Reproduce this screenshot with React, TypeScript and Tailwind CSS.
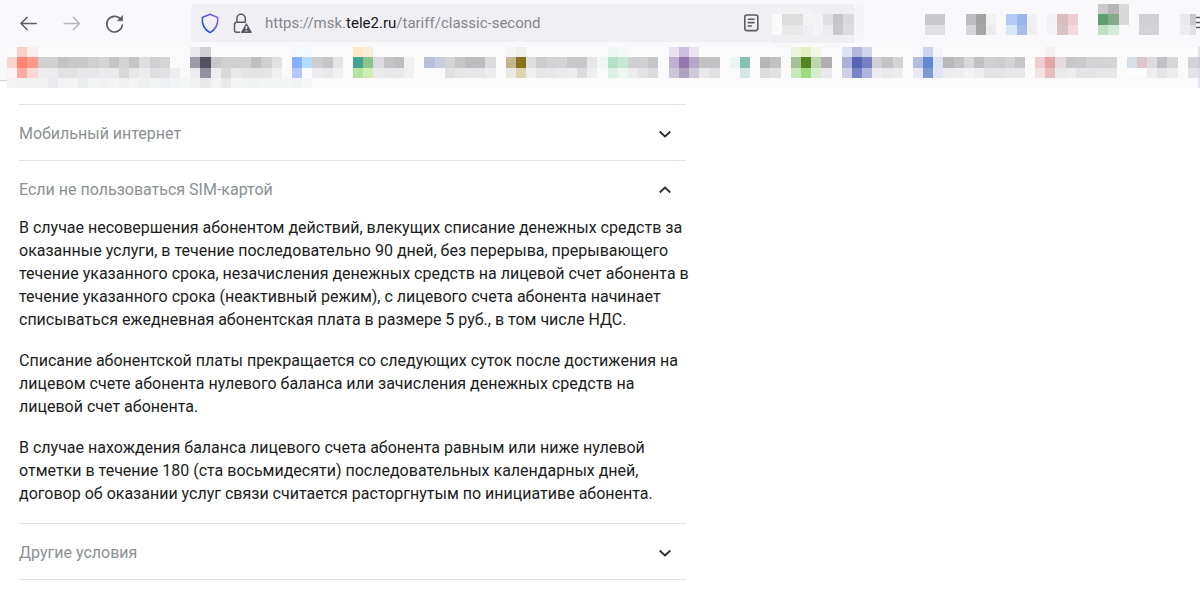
import React, { useState } from "react";

// [row, first column, colours of the following cells]
type Run = [number, number, string];

interface MosaicProps {
  runs: Run[];
  viewBox: string;
  className: string;
}

interface Section {
  id: string;
  title: string;
  paragraphs: string[][];
}

const toolbarRuns: Run[] = [
  [0, 0, "f1f1f4 f1f1f4 f1f1f4 f1f1f4 eeeef3 eeeef3 eeeef3 eeeef3 f6f6f8"],
  [1, 0, "fafafa dcdcdd dcdcdd f3f3f5 f3f3f5 e0e0e4 c6c6cb dad9de f5f5f7"],
  [2, 0, "fafafa e9e9ea e8e8ea eeeff2 f3f3f6 ebebef c8c8cd dddde1 f6f6f8"],
  [3, 0, "efeff2 efeff2 efeff2 efeff2 efeff2 efeff2 efeff2 efeff2 f7f7f9"],
  [1, 15, "cacace cacace"],
  [2, 15, "e0e0e3 e0e0e3"],
  [1, 19, "bdbdbf a2a2a2 f2f2f3"],
  [2, 19, "d5d5d7 a5a5a5 ebebec"],
  [1, 23, "b4ccf5 9ab6e8 f0f1f5"],
  [2, 23, "dae6fa a7bde8 efeff2"],
  [1, 27, "f2f2f5 d7bfc0 efcccf"],
  [2, 27, "f3f3f6 d5c3c5 f3dadc"],
  [0, 32, "cacacb b5b5b5 dadadb"],
  [1, 32, "5f9e74 85aa8a d9d9d9"],
  [2, 32, "bcdfc6 d2ead6"],
  [1, 36, "d0d0d4 cfcfd4"],
  [2, 36, "d4d4d8 d3d3d7"],
  [1, 40, "e9e9ec c9c9ce"],
  [2, 40, "eeeef0 e1e1e4"],
];

const bookmarkRuns: Run[] = [
  [0, 1, "fbd0c9 faeeee"],
  [1, 0, "fad5d0 fc8770 fb9a8a d0d0d0 d0d1d2 c3c3c4 c8c8ca c8c8ca cfcfd0 d4d4d6 c5c5c6 d3d3d4 c5c5c6 dfdfe1 cfcfd1 d5d5d6"],
  [2, 0, "fbf4f4 fdab9e fcd8d4 ededef ebecee e2e2e4 e2e2e3 e7e7e9 e8e8ea ebebed eaeaec d8d8da e7e7e8 ededef dfdfe1 e2e2e4 eeeef0"],
  [3, 0, "f3f3f4 f2f2f3 f2f2f3 f2f2f3 e8eaed f2f2f3 f3f3f4 ebecee f2f3f3 eff0f1 f3f3f4 f0f0f1 f3f3f4 eeeff0 f2f3f3 eeeff0 f1f2f3 f4f5f5 f0f2f2 e9e9eb f2f3f3 e9e9ea f3f3f4 f2f3f3 f1f2f2 f3f4f4 f2f3f3 f4f5f5 f1f2f3 f6f7f7"],
  [0, 18, "ebebef cfcfd4"],
  [1, 18, "9c9ca8 52525f c8c8cb d0d0d1 cecfd0 d1d1d2 bfbfc0 cfcfd1 e1e1e2"],
  [2, 18, "ededf0 91919e ededef d9d9db e9e9eb e4e4e6 e3e3e5 e4e4e6 f0f0f2"],
  [0, 28, "f4f8ff f5faff"],
  [1, 28, "86b0ff b3dcff cdcdcf c6c6c8 e4e4e6"],
  [2, 28, "b9c5ff fafcff ececee e8e8ea f0f0f2"],
  [0, 34, "fde9c6 f8eddb"],
  [1, 34, "43a292 8dc38d dcdce0 c4c4c7 bfbfc1 f1f1f3"],
  [2, 34, "b3e59f cfedb4 ebebed e8e8ea e9e9eb f0f0f2"],
  [1, 41, "b9c1da c8cde1 d3d3d4 c6c6c7 bdbdbf bdbdbf dcdcde"],
  [2, 41, "fafbfd fafbfd e0e0e2 e6e6e8 e7e7e9 e7e7e9 ececee"],
  [0, 49, "f6f6f7 efeeea"],
  [1, 49, "c0b78c 87711b dfdfe2 cccccd d2d2d4 d3d3d5 c8c8ca c8c8ca e6e6e8"],
  [2, 49, "ece9e0 ddd4b0 f0f0f2 e6e6e8 e8e8ea eaeaec ececee dcdcde eeeef0"],
  [0, 59, "eef6f2 f5f8f9"],
  [1, 58, "f2f6f5 b3e2c7 c5e9d4 cfcfd2 d0d0d2 c6c6c8"],
  [2, 59, "dbf1e4 eaf8f0 ececee e3e3e5 dcdcde"],
  [0, 65, "e8e1f0 cdbfde e9e3f2"],
  [1, 65, "c0b1d2 9377ae b7a8ca c3c3c6 c3c3c5"],
  [2, 65, "cdc6d8 afa4be cfc8da e8e8ea e1e1e3"],
  [1, 71, "ebf5f3 86c1b6"],
  [2, 72, "d2e6e8"],
  [1, 74, "b7b7ba c2c2c5"],
  [2, 74, "dddddf e2e2e4"],
  [0, 77, "ebf3db e2efc2 f2f6e5"],
  [1, 77, "a6c292 52841f bdd8ae afafb1"],
  [2, 77, "c9e9b9 a1d980 d7edcf e9e9eb"],
  [0, 82, "dfe2f1 b3b7dc d2d5e9"],
  [1, 82, "a9b1da 5b63b3 7780c1 d0d0d2 c3c3c5 d4d4d6"],
  [2, 82, "cdd0e8 7a83c3 afb5dd ececee e8e8ea ececee"],
  [0, 89, "f6f8fc ced6ec f3f5fa"],
  [1, 89, "b1bfe3 6488cd dce3f3 b9b9bb c3c3c5 d8d8da c1c1c3 cfcfd1 cdcdcf d4d4d6 c7c7c9"],
  [2, 89, "e6ebf7 8099d2 dfe5f4 ececee eeeef0 f3f3f5 eeeef0 e3e3e5 e3e3e5 e7e7e9 e7e7e9"],
  [0, 102, "f6eff0"],
  [1, 101, "efccd0 e3a5a8 e8d9dc c8c8ca cacacc d3d3d5 d3d3d5 d4d4d6"],
  [2, 101, "f5e3e4 eabdbf ebe9eb ededef e4e4e6 e4e4e6 e7e7e9 e7e7e9"],
  [1, 110, "d7dfe7 ddc6ca dddde0 c1c1c5 d7d7da"],
  [2, 110, "fcfcfc fcfcfc eeeef0 e5e5e7 ececee"],
  [0, 117, "dfe3ea"],
  [1, 116, "d2d2d7 c8cdd6"],
  [2, 116, "e4e4e7 d7dce5"],
  [3, 117, "e3e6ee"],
];

const sections: Section[] = [
  {
    id: "internet",
    title: "Мобильный интернет",
    paragraphs: [],
  },
  {
    id: "sim",
    title: "Если не пользоваться SIM-картой",
    paragraphs: [
      [
        "В случае несовершения абонентом действий, влекущих списание денежных средств за",
        "оказанные услуги, в течение последовательно 90 дней, без перерыва, прерывающего",
        "течение указанного срока, незачисления денежных средств на лицевой счет абонента в",
        "течение указанного срока (неактивный режим), с лицевого счета абонента начинает",
        "списываться ежедневная абонентская плата в размере 5 руб., в том числе НДС.",
      ],
      [
        "Списание абонентской платы прекращается со следующих суток после достижения на",
        "лицевом счете абонента нулевого баланса или зачисления денежных средств на",
        "лицевой счет абонента.",
      ],
      [
        "В случае нахождения баланса лицевого счета абонента равным или ниже нулевой",
        "отметки в течение 180 (ста восьмидесяти) последовательных календарных дней,",
        "договор об оказании услуг связи считается расторгнутым по инициативе абонента.",
      ],
    ],
  },
  {
    id: "other",
    title: "Другие условия",
    paragraphs: [],
  },
];

const Mosaic: React.FC<MosaicProps> = ({ runs, viewBox, className }) => (
  <svg
    viewBox={viewBox}
    preserveAspectRatio="none"
    shapeRendering="crispEdges"
    className={className}
    aria-hidden="true"
  >
    {runs.map(([row, start, colors]) =>
      colors.split(" ").map((color, i) => (
        <rect
          key={`${row}-${start + i}`}
          x={start + i}
          y={row}
          width={1}
          height={1}
          fill={`#${color}`}
        />
      ))
    )}
  </svg>
);

const Toolbar: React.FC = () => {
  const [url, setUrl] = useState("https://msk.tele2.ru/tariff/classic-second");
  const [editing, setEditing] = useState(false);

  return (
    <div className="flex h-[47px] items-start bg-[#f9f9fb] pt-1">
      <div className="flex h-[38px] w-[191px] shrink-0 items-center gap-[19px] pl-4">
        <button aria-label="Назад" className="text-[#5b5b66]">
          <svg width="24" height="24" viewBox="0 0 24 24" fill="none" stroke="currentColor" strokeWidth="1.5" strokeLinecap="round" strokeLinejoin="round">
            <path d="M20.3 12.5H5M11.2 6.3L5 12.5l6.2 6.2" />
          </svg>
        </button>
        <button aria-label="Вперёд" disabled className="text-[#b7b7bd]">
          <svg width="24" height="24" viewBox="0 0 24 24" fill="none" stroke="currentColor" strokeWidth="1.5" strokeLinecap="round" strokeLinejoin="round">
            <path d="M5.2 12.5H20.5M14.3 6.3l6.2 6.2-6.2 6.2" />
          </svg>
        </button>
        <button aria-label="Обновить" className="text-[#5b5b66]">
          <svg width="24" height="24" viewBox="0 0 24 24" fill="none" stroke="currentColor" strokeWidth="1.6" strokeLinecap="round">
            <path d="M18.6 8.2A7.8 7.8 0 1 0 20.3 14" />
            <path d="M20.6 4.8v5h-5z" fill="currentColor" strokeWidth="0.6" strokeLinejoin="round" />
          </svg>
        </button>
      </div>
      <div className="flex h-[38px] min-w-0 flex-1 items-center rounded-l bg-[#f0f0f4] pr-3 pl-2">
        <button aria-label="Защита от отслеживания">
          <svg width="22" height="24" viewBox="0 0 22 24" fill="none">
            <defs>
              <linearGradient id="shield" x1="0" y1="1" x2="1" y2="0">
                <stop offset="0.25" stopColor="#2b4fd0" />
                <stop offset="1" stopColor="#9a63f5" />
              </linearGradient>
            </defs>
            <path
              d="M11 3.3l7.7 3.2c.5 6.4-1.5 11.8-7.7 15.1C4.8 18.3 2.800 12.9 3.3 6.5z"
              stroke="url(#shield)"
              strokeWidth="1.5"
              strokeLinejoin="round"
            />
          </svg>
        </button>
        <button aria-label="Соединение не защищено" className="ml-3 text-[#5b5b66]">
          <svg width="20" height="24" viewBox="0 0 20 24" fill="none" stroke="currentColor" strokeWidth="1.5">
            <path d="M3.9 11.3V7.500a4.200 4.200 0 0 1 8.400 0v3.800M6.500 21.300H3.500a2 2 0 0 1-2-2v-6a2 2 0 0 1 2-2h9" strokeLinecap="round" />
            <path d="M13.4 13l4.800 8.300h-9.600z" fill="currentColor" strokeLinejoin="round" strokeWidth="1.2" />
            <path d="M13.4 15v3M13.4 19.200v1.300" stroke="#f0f0f4" strokeWidth="1.5" />
          </svg>
        </button>
        <div className="ml-3 min-w-0 flex-1 font-['Roboto',sans-serif] text-[15px] leading-6 text-[#86868c]">
          {editing ? (
            <input
              aria-label="Адрес"
              autoFocus
              value={url}
              onChange={(e) => setUrl(e.target.value)}
              onBlur={() => setEditing(false)}
              className="w-full bg-transparent text-[#15141a] outline-none"
            />
          ) : (
            <button
              onClick={() => setEditing(true)}
              className="block w-full cursor-text truncate text-left"
            >
              https://msk.<span className="text-[#15141a]">tele2.ru</span>
              /tariff/classic-second
            </button>
          )}
        </div>
        <button aria-label="Режим чтения" className="text-[#5b5b66]">
          <svg width="18" height="20" viewBox="0 0 18 20" fill="none" stroke="currentColor" strokeWidth="1.6" strokeLinecap="round">
            <rect x="2.8" y="2" width="13" height="15.6" rx="2" />
            <path d="M6.3 6.2h5.8M6.3 9.6h5.8M6.3 13h3" />
          </svg>
        </button>
      </div>
      <Mosaic
        runs={toolbarRuns}
        viewBox="0 0 41.6 3.8"
        className="h-[39px] w-[424px] shrink-0"
      />
      <button
        aria-label="Меню"
        className="h-[38px] w-1 shrink-0 overflow-hidden text-[#5b5b66]"
      >
        <svg width="16" height="38" viewBox="0 0 16 38" stroke="currentColor" strokeWidth="1.3" className="max-w-none">
          <path d="M0 13.500h16M0 18.500h16M0 23.500h16" />
        </svg>
      </button>
    </div>
  );
};

const BookmarksBar: React.FC = () => (
  <div className="flex h-[41px]">
    <div className="h-[34px] w-[7px] shrink-0 border-b border-[#d0d0d4] bg-[#f9f9fb]" />
    <div className="h-full min-w-0 flex-1 bg-[#fafafb]">
      <Mosaic
        runs={bookmarkRuns}
        viewBox="0 0 117.2 4"
        className="block h-full w-full"
      />
    </div>
  </div>
);

const App: React.FC = () => {
  const [openIds, setOpenIds] = useState<string[]>(["sim"]);

  const toggleSection = (id: string) => {
    setOpenIds((prev) =>
      prev.includes(id) ? prev.filter((item) => item !== id) : [...prev, id]
    );
  };

  return (
    <div className="min-h-screen overflow-hidden bg-white">
      <header>
        <Toolbar />
        <BookmarksBar />
      </header>
      <main className="mt-4 ml-[19px] max-w-[667px] border-t border-[#dfe5e6] font-['Roboto',sans-serif] text-base">
        {sections.map((section) => {
          const open = openIds.includes(section.id);
          return (
            <section key={section.id} className="border-b border-[#dfe5e6]">
              <h2>
                <button
                  onClick={() => toggleSection(section.id)}
                  aria-expanded={open}
                  aria-controls={`panel-${section.id}`}
                  className="flex h-[55px] w-full items-center justify-between pt-0.5 pr-[15px] text-left text-[#8b9094]"
                >
                  {section.title}
                  <svg width="12" height="8" viewBox="0 0 12 8" fill="none" stroke="#2b2d33" strokeWidth="1.8">
                    <path d={open ? "M0.7 6.5L6 1.5l5.3 5" : "M0.7 1.5L6 6.5l5.3-5"} />
                  </svg>
                </button>
              </h2>
              <div
                id={`panel-${section.id}`}
                hidden={!open || section.paragraphs.length === 0}
                className="space-y-[18px] pb-[18px] leading-[23px] whitespace-nowrap text-[#1b1d22]"
              >
                {section.paragraphs.map((lines) => (
                  <p key={lines[0]}>
                    {lines.map((line) => (
                      <span key={line} className="block">
                        {line}
                      </span>
                    ))}
                  </p>
                ))}
              </div>
            </section>
          );
        })}
      </main>
    </div>
  );
};

export default App;
